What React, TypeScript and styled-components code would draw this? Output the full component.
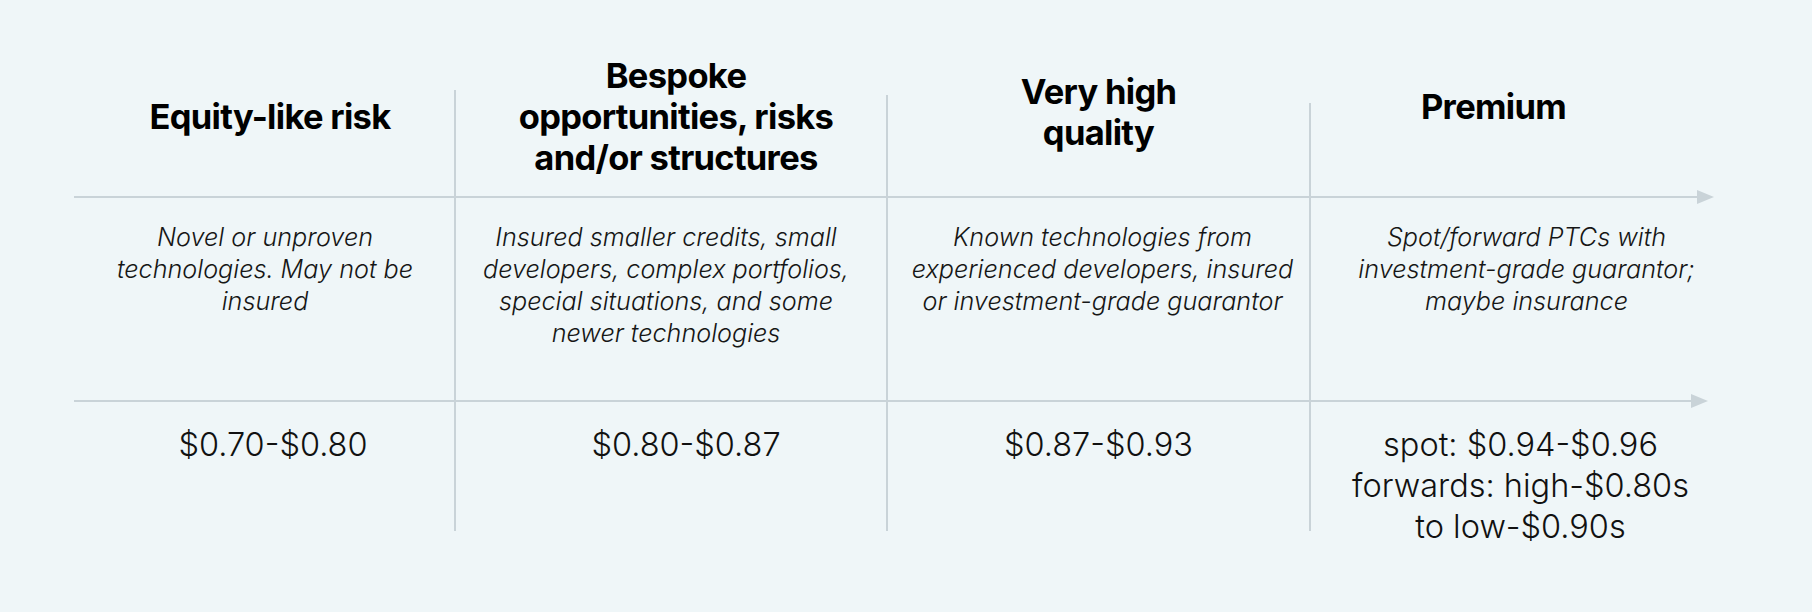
import React from "react";
import styled, { createGlobalStyle } from "styled-components";

const GlobalStyle = createGlobalStyle`
  html, body {
    margin: 0;
    padding: 0;
    background: #eff6f8;
  }
  body {
    font-family: Inter, "Noto Sans", "Liberation Sans", sans-serif;
    color: #111;
  }
`;

const LINE = "#c9d3d8";

const Page = styled.div`
  width: 1812px;
  height: 612px;
  box-sizing: border-box;
  padding: 40px 0 0 74px;
  background: #eff6f8;
`;

const Grid = styled.div`
  display: grid;
  grid-template-columns: 380px 2px 430px 2px 421px 2px 403px;
  grid-template-rows: 156px 2px 202px 2px 129px;
  width: 1640px;
`;

const Divider = styled.div<{ $col: number; $top: number }>`
  grid-column: ${(p) => p.$col};
  grid-row: 1 / 6;
  margin-top: ${(p) => p.$top}px;
  background: ${LINE};
`;

const Axis = styled.div<{ $row: number; $inset: number }>`
  grid-column: 1 / -1;
  grid-row: ${(p) => p.$row};
  display: flex;
  align-items: center;
  margin-right: ${(p) => p.$inset}px;
`;

const AxisLine = styled.div`
  flex: 1;
  height: 2px;
  background: ${LINE};
`;

const ArrowHead = styled.svg`
  flex: none;
  width: 17px;
  height: 14px;
  display: block;
`;

const Cell = styled.div<{ $col: number; $row: number; $shift: number; $top: number }>`
  grid-column: ${(p) => p.$col};
  grid-row: ${(p) => p.$row};
  text-align: center;
  white-space: nowrap;
  padding-top: ${(p) => p.$top}px;
  padding-left: ${(p) => Math.max(0, p.$shift * 2)}px;
  padding-right: ${(p) => Math.max(0, -p.$shift * 2)}px;
  min-width: 0;
`;

const Heading = styled.h2`
  margin: 0;
  font-family: Inter, "Liberation Sans", sans-serif;
  font-weight: 700;
  font-size: 34.5px;
  line-height: 41px;
  letter-spacing: -0.02em;
  color: #000;
`;

const Description = styled.p`
  margin: 0;
  font-family: Inter, "Liberation Sans", sans-serif;
  font-style: italic;
  font-weight: 300;
  font-size: 25.2px;
  line-height: 32px;
  color: #161616;
`;

const Price = styled.p`
  margin: 0;
  font-family: Inter, "Liberation Sans", sans-serif;
  font-weight: 300;
  font-size: 32.5px;
  line-height: 41px;
  color: #111;
`;

type Column = {
  heading: string[];
  headTop: number;
  headShift: number;
  desc: string[];
  descShift: number;
  price: string[];
  priceShift: number;
};

const columns: Column[] = [
  {
    heading: ["Equity-like risk"],
    headTop: 56,
    headShift: 6,
    desc: ["Novel or unproven", "technologies. May not be", "insured"],
    descShift: 1,
    price: ["$0.70-$0.80"],
    priceShift: 9,
  },
  {
    heading: ["Bespoke", "opportunities, risks", "and/or structures"],
    headTop: 15,
    headShift: 5,
    desc: [
      "Insured smaller credits, small",
      "developers, complex portfolios,",
      "special situations, and some",
      "newer technologies",
    ],
    descShift: -5,
    price: ["$0.80-$0.87"],
    priceShift: 15,
  },
  {
    heading: ["Very high", "quality"],
    headTop: 31,
    headShift: 0,
    desc: [
      "Known technologies from",
      "experienced developers, insured",
      "or investment-grade guarantor",
    ],
    descShift: 4,
    price: ["$0.87-$0.93"],
    priceShift: 0,
  },
  {
    heading: ["Premium"],
    headTop: 46,
    headShift: -19,
    desc: ["Spot/forward PTCs with", "investment-grade guarantor;", "maybe insurance"],
    descShift: 14,
    price: ["spot: $0.94-$0.96", "forwards: high-$0.80s", "to low-$0.90s"],
    priceShift: 8,
  },
];

const dividerTops = [50, 55, 63];

const Lines = ({ lines }: { lines: string[] }) => (
  <>
    {lines.map((l, i) => (
      <React.Fragment key={i}>
        {i > 0 && <br />}
        {l}
      </React.Fragment>
    ))}
  </>
);

const Arrow = () => (
  <ArrowHead viewBox="0 0 17 14">
    <polygon points="0,0 17,7 0,14" fill={LINE} />
  </ArrowHead>
);

export default function App() {
  return (
    <Page>
      <GlobalStyle />
      <Grid>
        {dividerTops.map((t, i) => (
          <Divider key={i} $col={i * 2 + 2} $top={t} />
        ))}
        <Axis $row={2} $inset={0}>
          <AxisLine />
          <Arrow />
        </Axis>
        <Axis $row={4} $inset={6}>
          <AxisLine />
          <Arrow />
        </Axis>
        {columns.map((c, i) => (
          <React.Fragment key={i}>
            <Cell $col={i * 2 + 1} $row={1} $shift={c.headShift} $top={c.headTop}>
              <Heading>
                <Lines lines={c.heading} />
              </Heading>
            </Cell>
            <Cell $col={i * 2 + 1} $row={3} $shift={c.descShift} $top={23}>
              <Description>
                <Lines lines={c.desc} />
              </Description>
            </Cell>
            <Cell $col={i * 2 + 1} $row={5} $shift={c.priceShift} $top={22}>
              <Price>
                <Lines lines={c.price} />
              </Price>
            </Cell>
          </React.Fragment>
        ))}
      </Grid>
    </Page>
  );
}
